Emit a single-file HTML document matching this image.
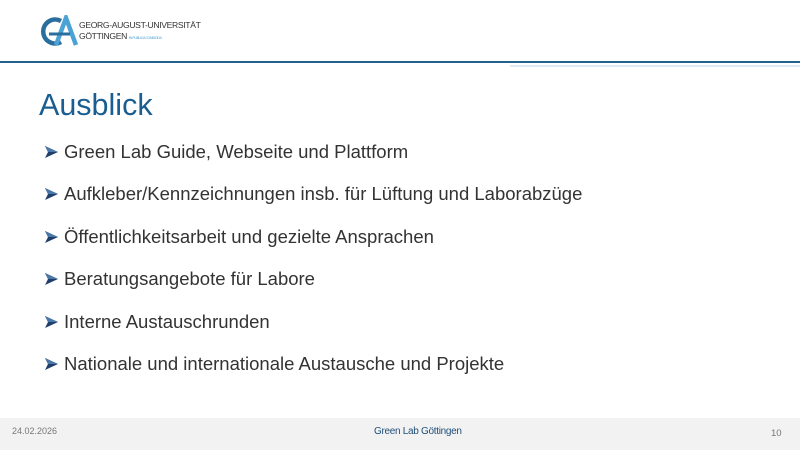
<!DOCTYPE html>
<html><head><meta charset="utf-8"><style>
body{margin:0;width:800px;height:450px;position:relative;overflow:hidden;background:#fff;font-family:"Liberation Sans",sans-serif}
.a{position:absolute}
.li{position:absolute;left:64px;font-size:18.5px;color:#333;white-space:nowrap}
.ar{position:absolute;left:44px}
</style></head><body>
<svg class="a" style="left:39px;top:15px" width="40" height="32" viewBox="0 0 40 32">
<path d="M22 6 A12 12 0 1 0 22 27" fill="none" stroke="#2a6e9e" stroke-width="4.5"/>
<path d="M17 30 L27 3 L37 30" fill="none" stroke="#4aa3d4" stroke-width="4.5"/>
<path d="M10 19 L31 19" stroke="#2a6e9e" stroke-width="3"/>
</svg>
<div class="a" style="left:79px;top:20px;font-size:8.6px;color:#333;letter-spacing:-0.35px">GEORG-AUGUST-UNIVERSITÄT</div>
<div class="a" style="left:79px;top:31px;font-size:8.6px;color:#333;letter-spacing:-0.35px">GÖTTINGEN <span style="font-size:3.5px;color:#4aa3d4">IN PUBLICA COMMODA</span></div>
<div class="a" style="left:0;top:61px;width:800px;height:2px;background:#23618f"></div>
<div class="a" style="left:510px;top:65px;width:290px;height:2px;background:#dce8f4"></div>
<div class="a" style="left:39px;top:88px;font-size:30.5px;color:#1a5e91">Ausblick</div>
<svg class="ar" style="top:145px" width="15" height="14" viewBox="0 0 15 14"><path d="M1 1 L14 7 L1 13 L4 7 Z" fill="#1f3f6a"/><path d="M1 1 L14 7 L4 7 Z" fill="#4a78a8"/></svg>
<div class="li" style="top:141px">Green Lab Guide, Webseite und Plattform</div>
<svg class="ar" style="top:187px" width="15" height="14" viewBox="0 0 15 14"><path d="M1 1 L14 7 L1 13 L4 7 Z" fill="#1f3f6a"/><path d="M1 1 L14 7 L4 7 Z" fill="#4a78a8"/></svg>
<div class="li" style="top:183px">Aufkleber/Kennzeichnungen insb. für Lüftung und Laborabzüge</div>
<svg class="ar" style="top:230px" width="15" height="14" viewBox="0 0 15 14"><path d="M1 1 L14 7 L1 13 L4 7 Z" fill="#1f3f6a"/><path d="M1 1 L14 7 L4 7 Z" fill="#4a78a8"/></svg>
<div class="li" style="top:226px">Öffentlichkeitsarbeit und gezielte Ansprachen</div>
<svg class="ar" style="top:272px" width="15" height="14" viewBox="0 0 15 14"><path d="M1 1 L14 7 L1 13 L4 7 Z" fill="#1f3f6a"/><path d="M1 1 L14 7 L4 7 Z" fill="#4a78a8"/></svg>
<div class="li" style="top:268px">Beratungsangebote für Labore</div>
<svg class="ar" style="top:315px" width="15" height="14" viewBox="0 0 15 14"><path d="M1 1 L14 7 L1 13 L4 7 Z" fill="#1f3f6a"/><path d="M1 1 L14 7 L4 7 Z" fill="#4a78a8"/></svg>
<div class="li" style="top:311px">Interne Austauschrunden</div>
<svg class="ar" style="top:357px" width="15" height="14" viewBox="0 0 15 14"><path d="M1 1 L14 7 L1 13 L4 7 Z" fill="#1f3f6a"/><path d="M1 1 L14 7 L4 7 Z" fill="#4a78a8"/></svg>
<div class="li" style="top:353px">Nationale und internationale Austausche und Projekte</div>
<div class="a" style="left:0;top:418px;width:800px;height:32px;background:#f2f2f2"></div>
<div class="a" style="left:12px;top:426px;font-size:9px;color:#777">24.02.2026</div>
<div class="a" style="left:374px;top:426px;font-size:10px;color:#1f4e79;letter-spacing:-0.3px">Green Lab Göttingen</div>
<div class="a" style="left:771px;top:428px;font-size:9.5px;color:#777">10</div>
</body></html>
